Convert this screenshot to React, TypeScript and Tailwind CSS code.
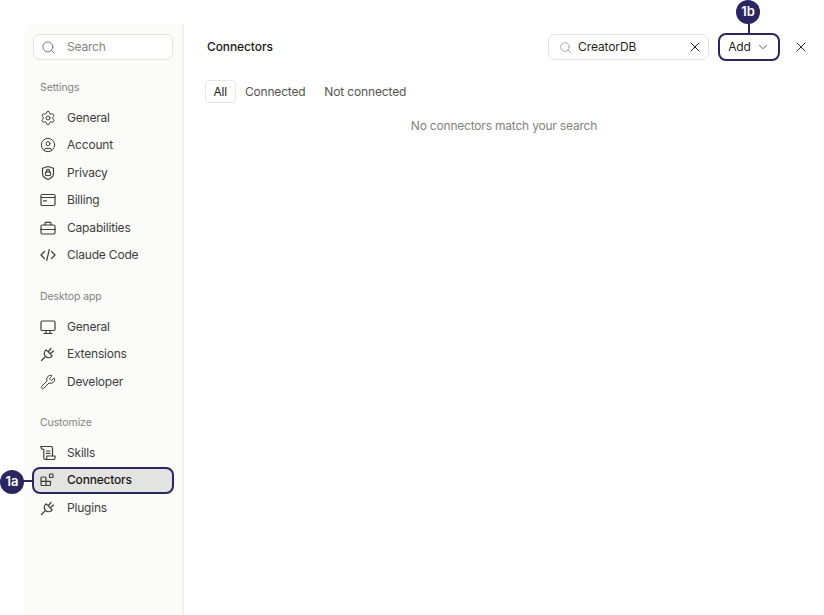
import React from "react";
import { Search, Settings, CircleUser, Wrench, X, ChevronDown } from "lucide-react";

const Ic = ({ children }: { children: React.ReactNode }) => (
  <svg width="16" height="16" viewBox="0 0 16 16" fill="none" stroke="currentColor" strokeWidth="1.200" strokeLinecap="round" strokeLinejoin="round">{children}</svg>
);

const ShieldLock = () => (
  <Ic>
    <path d="M8 1.500 13.500 3.300v5.200c0 3-2.700 4.900-5.500 6-2.800-1.100-5.500-3-5.500-6V3.300z" />
    <rect x="5.500" y="6.800" width="5" height="3.700" rx="1" />
    <path d="M6.500 6.800V5.900a1.500 1.500 0 0 1 3 0v.9" />
  </Ic>
);
const Card = () => (
  <Ic>
    <rect x="1" y="2.500" width="14" height="11" rx="1.200" />
    <path d="M1 5.500h14M3.500 8.800h3" />
  </Ic>
);
const Case = () => (
  <Ic>
    <rect x="1" y="5" width="14" height="9" rx="1.500" />
    <path d="M5 5V3.300a1 1 0 0 1 1-1h4a1 1 0 0 1 1 1V5M1 9.500h4.500M10.500 9.500H15M6.500 9.500h3" />
  </Ic>
);
const Code = () => (
  <Ic>
    <path d="M4.500 4.500 1 8l3.500 3.500M11.500 4.500 15 8l-3.500 3.500M9.300 2.500 6.700 13.500" />
  </Ic>
);
const Screen = () => (
  <Ic>
    <rect x="1" y="2" width="14" height="9.500" rx="1.200" />
    <path d="M6 11.500v3M10 11.500v3M4 14.500h8" />
  </Ic>
);
const PlugIcon = () => (
  <Ic>
    <path d="M6.200 3.800 12.200 9.800C10.500 12 7.500 12.500 5.500 10.500 3.500 8.500 4 5.500 6.200 3.800z" />
    <path d="M4.800 11.200 3.500 12.500C2.800 13.200 2 14 1.500 14.500M8.500 5.500 11 2.500M10.500 7.500 13.500 5" />
  </Ic>
);
const Scroll = () => (
  <Ic>
    <path d="M1 1.500h10c.8 0 1.500.7 1.500 1.500v8" />
    <path d="M1 1.500c0 1.700.8 3 2.800 3V13c0 1 .7 1.500 1.500 1.500h8.200c1 0 1.500-.7 1.500-1.700V11H6.800v1.800c0 1-.7 1.700-1.500 1.700" />
    <path d="M6.300 6h3.700M6.300 8.300h3.700" />
  </Ic>
);
const Blocks = () => (
  <Ic>
    <rect x="9.500" y="2" width="3.500" height="3.500" rx=".6" />
    <path d="M2 5h3a1 1 0 0 1 1 1v7.500H2a1 1 0 0 1-1-1V6a1 1 0 0 1 1-1zM1 9.300h9.500M6 13.500h3.500a1 1 0 0 0 1-1V9.300" />
  </Ic>
);

const L = ({ I }: { I: React.ComponentType<any> }) => <I size={16} strokeWidth={1.500} />;

type It = { icon: React.ReactNode; label: string };
const settings: It[] = [
  { icon: <L I={Settings} />, label: "General" },
  { icon: <L I={CircleUser} />, label: "Account" },
  { icon: <ShieldLock />, label: "Privacy" },
  { icon: <Card />, label: "Billing" },
  { icon: <Case />, label: "Capabilities" },
  { icon: <Code />, label: "Claude Code" },
];
const desktop: It[] = [
  { icon: <Screen />, label: "General" },
  { icon: <PlugIcon />, label: "Extensions" },
  { icon: <L I={Wrench} />, label: "Developer" },
];

const Row = ({ icon, label }: It) => (
  <div className="flex h-[27.500px] items-center pl-[7px] text-[12px] tracking-[-0.2px] text-[#3d3d3a]">
    <span className="flex w-[27px] shrink-0 items-center">{icon}</span>
    <span>{label}</span>
  </div>
);

const Label = ({ children }: { children: React.ReactNode }) => (
  <div className="flex h-[16px] items-center pl-[7px] text-[10.500px] tracking-[-0.1px] text-[#83827d]">{children}</div>
);

const Badge = ({ children, className }: { children: React.ReactNode; className: string }) => (
  <div className={"absolute flex h-[24px] w-[24px] items-center justify-center rounded-full bg-[#2b2661] text-[13px] font-semibold text-white " + className}>{children}</div>
);

export default function App() {
  return (
    <div className="h-[615px] w-[824px] overflow-hidden bg-white pl-[24px] pt-[24px] font-['Inter',sans-serif]">
      <div className="flex h-[591px]">
        <aside className="flex h-full w-[160px] shrink-0 flex-col rounded-tl-[8px] border-r-2 border-[#f0f0ee] bg-[#fbfbfa] pl-[9px] pr-[9px] pt-[9.500px]">
          <div className="flex h-[26.500px] w-[140px] items-center rounded-[7px] border border-[#e4e3df] bg-white pl-[7px] pt-[1px] text-[12px] tracking-[-0.2px] text-[#83827d]">
            <span className="flex w-[26px] items-center text-[#55544f]"><Search size={15} strokeWidth={1.250} /></span>
            Search
          </div>
          <div className="mt-[20px]"><Label>Settings</Label></div>
          <div className="mt-[8px]">{settings.map((i, n) => <Row key={n} {...i} />)}</div>
          <div className="mt-[20px]"><Label>Desktop app</Label></div>
          <div className="mt-[8px]">{desktop.map((i, n) => <Row key={n} {...i} />)}</div>
          <div className="mt-[19.500px]"><Label>Customize</Label></div>
          <div className="mt-[8px]">
            <Row icon={<Scroll />} label="Skills" />
            <div className="relative">
              <div className="-mx-[1px] flex h-[27.500px] w-[142px] items-center rounded-[8px] border-2 border-[#2b2661] bg-[#e3e3e1] pl-[6px] text-[12px] font-medium tracking-[-0.2px] text-[#1a1a18]">
                <span className="flex w-[27px] shrink-0 items-center text-[#3d3d3a]"><Blocks /></span>
                Connectors
              </div>
              <div className="absolute left-[-10px] top-[13px] h-[2px] w-[10px] bg-[#2b2661]" />
              <Badge className="left-[-33px] top-[3px]">1a</Badge>
            </div>
            <Row icon={<PlugIcon />} label="Plugins" />
          </div>
        </aside>
        <main className="min-w-0 flex-1 pl-[23px] pr-[15px] pt-[9.500px]">
          <header className="flex h-[26.500px] items-center">
            <h1 className="flex-1 pt-[1px] text-[12px] font-medium tracking-[-0.1px] text-[#1a1a18]">Connectors</h1>
            <div className="flex h-[26.500px] w-[161px] items-center rounded-[7px] border border-[#e4e3df] bg-white pl-[10px] pr-[5px] pt-[1px] text-[12px] tracking-[-0.1px] text-[#1f1f1d]">
              <Search size={13} strokeWidth={1.250} className="mr-[6px] text-[#83827d]" />
              <span className="flex-1">CreatorDB</span>
              <X size={16} strokeWidth={1.500} />
            </div>
            <div className="relative ml-[9px]">
              <div className="flex h-[27.500px] w-[62px] items-center justify-center gap-[5px] rounded-[8px] border-2 border-[#2b2661] pt-[1px] text-[12px] tracking-[-0.1px] text-[#1f1f1d]">
                Add <ChevronDown size={14} strokeWidth={1.250} />
              </div>
              <div className="absolute left-[30px] top-[-10px] h-[10px] w-[2px] bg-[#2b2661]" />
              <Badge className="left-[18px] top-[-33px]">1b</Badge>
            </div>
            <span className="ml-[13px] flex text-[#2b2b29]"><X size={16} strokeWidth={1.500} /></span>
          </header>
          <div className="-ml-[2px] mt-[20px] flex items-center text-[12px] tracking-[-0.2px] text-[#55544f]">
            <div className="flex h-[23px] items-center rounded-[4px] border border-[#e8e7e3] px-[7.500px] pt-[1px] text-[#1a1a18]">All</div>
            <span className="ml-[9.500px] pt-[1px]">Connected</span>
            <span className="ml-[19px] pt-[1px] tracking-[-0.15px]">Not connected</span>
          </div>
          <p className="mt-[13.500px] pr-[8px] text-center text-[12px] tracking-[-0.2px] text-[#83827d]">No connectors match your search</p>
        </main>
      </div>
    </div>
  );
}
